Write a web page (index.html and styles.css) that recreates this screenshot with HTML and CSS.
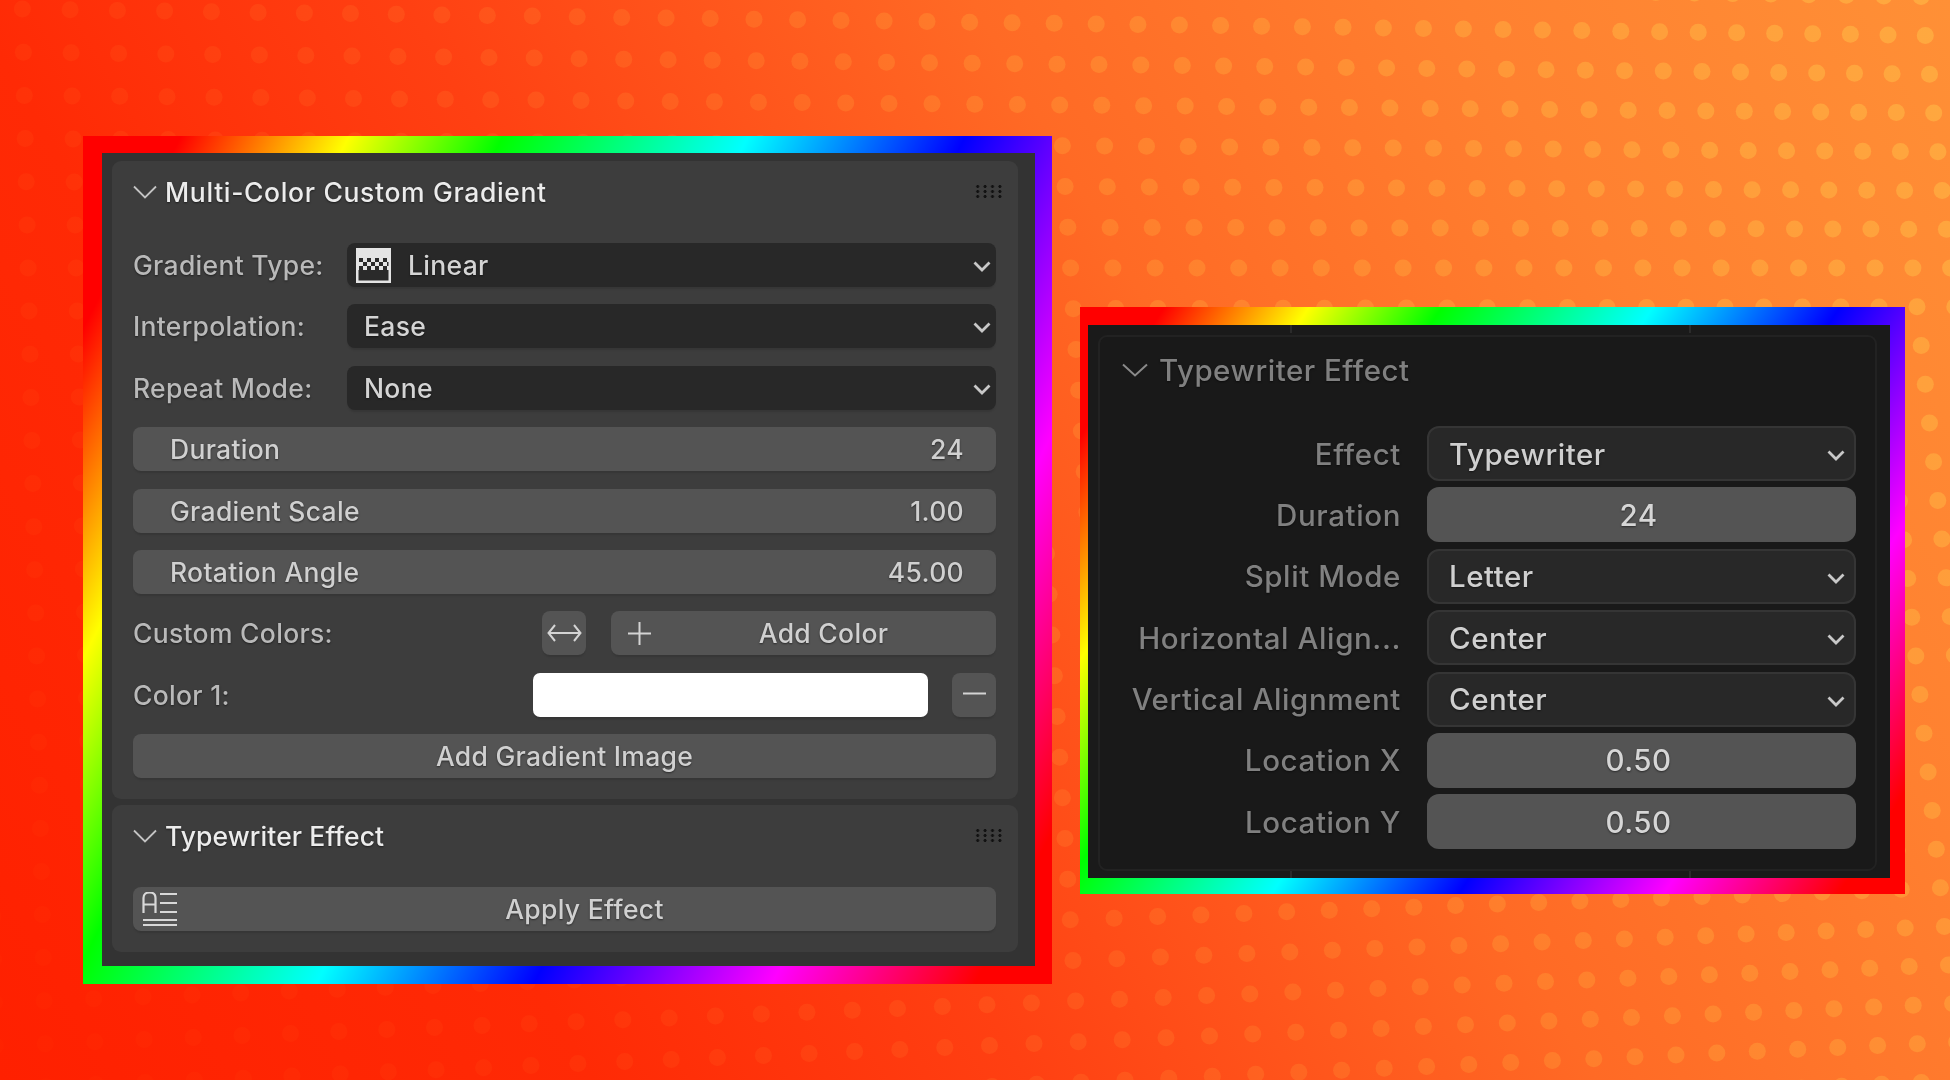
FILE: index.html
```html
<!DOCTYPE html>
<html lang="en">
<head>
<meta charset="utf-8">
<title>Gradient and Typewriter Panels</title>
<link rel="stylesheet" href="styles.css">
</head>
<body>
<div class="stage">
  <svg class="dots" id="dots" width="1950" height="1080" viewBox="0 0 1950 1080" aria-hidden="true">
    <defs>
      <linearGradient id="dotFill" gradientUnits="userSpaceOnUse" x1="10" y1="1097" x2="1940" y2="-17">
        <stop offset="0" stop-color="#ff2200"/>
        <stop offset="0.23" stop-color="#ff3208"/>
        <stop offset="0.4" stop-color="#ff4e18"/>
        <stop offset="0.62" stop-color="#ff7e2c"/>
        <stop offset="0.81" stop-color="#ff9838"/>
        <stop offset="1" stop-color="#ffaa40"/>
      </linearGradient>
    </defs>
  </svg>

  <section class="frame frame-left">
    <div class="inner inner-left">
      <div class="panel">
        <header class="head">
          <svg class="fold" viewBox="0 0 24 14"><path d="M1 1.500 12 12.500 23 1.500"/></svg>
          <span class="title title-long">Multi-Color Custom Gradient</span>
          <i class="grip"></i>
        </header>
        <div class="rows">
          <div class="row">
            <span class="label">Gradient Type:</span>
            <div class="select select-wide">
              <svg class="gradicon" viewBox="0 0 35 35">
                <rect x="0" y="0" width="35" height="35" fill="#e4e4e4"/>
                <rect x="2.500" y="22" width="30" height="10.500" fill="#2a2a2a"/>
                <path fill="#2a2a2a" d="M3 10h4v4H3zM11 10h4v4h-4zM19 10h4v4h-4zM27 10h4v4h-4zM7 14h4v4H7zM15 14h4v4h-4zM23 14h4v4h-4zM31 14h1.500v4H31zM3 18h4v4H3zM11 18h4v4h-4zM19 18h4v4h-4zM27 18h4v4h-4z"/>
              </svg>
              <span class="value icon-value">Linear</span>
              <svg class="caret" viewBox="0 0 18 11"><path d="M1.500 1.500 9 9 16.500 1.500"/></svg>
            </div>
          </div>
          <div class="row">
            <span class="label">Interpolation:</span>
            <div class="select select-wide">
              <span class="value">Ease</span>
              <svg class="caret" viewBox="0 0 18 11"><path d="M1.500 1.500 9 9 16.500 1.500"/></svg>
            </div>
          </div>
          <div class="row">
            <span class="label">Repeat Mode:</span>
            <div class="select select-wide">
              <span class="value">None</span>
              <svg class="caret" viewBox="0 0 18 11"><path d="M1.500 1.500 9 9 16.500 1.500"/></svg>
            </div>
          </div>
          <div class="field"><span>Duration</span><span>24</span></div>
          <div class="field"><span>Gradient Scale</span><span>1.00</span></div>
          <div class="field"><span>Rotation Angle</span><span>45.00</span></div>
          <div class="row">
            <span class="label label-grow">Custom Colors:</span>
            <div class="btn btn-square btn-swap">
              <svg class="swap" viewBox="0 0 35 20"><path d="M8 2 1.500 10 8 18M27 2 33.500 10 27 18M2 10H33"/></svg>
            </div>
            <div class="btn btn-add">
              <svg class="plus" viewBox="0 0 23 23"><path d="M11.500 0V23M0 11.500H23"/></svg>
              <span class="btn-text">Add Color</span>
            </div>
          </div>
          <div class="row">
            <span class="label label-grow">Color 1:</span>
            <div class="swatch"></div>
            <div class="btn btn-square">
              <svg class="plus" viewBox="0 0 23 23"><path d="M0 10.500H23"/></svg>
            </div>
          </div>
          <div class="btn btn-full"><span class="btn-text">Add Gradient Image</span></div>
        </div>
      </div>
      <div class="panel">
        <header class="head">
          <svg class="fold" viewBox="0 0 24 14"><path d="M1 1.500 12 12.500 23 1.500"/></svg>
          <span class="title">Typewriter Effect</span>
          <i class="grip"></i>
        </header>
        <div class="btn btn-apply">
          <svg class="texticon" viewBox="0 0 36 34">
            <path d="M1.500 22V7C1.500 3 4 1.500 7.500 1.500S13.500 3 13.500 7V22M1.500 13.500H13.500M18 3H35M18 12H35M18 21H35M1 29H35M1 34H35" transform="translate(0 -1)"/>
          </svg>
          <span class="btn-text">Apply Effect</span>
        </div>
      </div>
    </div>
  </section>

  <section class="frame frame-right">
    <div class="inner inner-right">
      <div class="panel-dark">
        <header class="head head-dark">
          <svg class="fold fold-dark" viewBox="0 0 26 14"><path d="M1 1.500 13 12.500 25 1.500"/></svg>
          <span class="title title-dark">Typewriter Effect</span>
        </header>
        <div class="props">
          <span class="prop-label">Effect</span>
          <div class="select select-dark"><span class="value">Typewriter</span><svg class="caret caret-dark" viewBox="0 0 18 11"><path d="M1.500 1.500 9 9 16.500 1.500"/></svg></div>
          <span class="prop-label">Duration</span>
          <div class="num">24</div>
          <span class="prop-label">Split Mode</span>
          <div class="select select-dark"><span class="value">Letter</span><svg class="caret caret-dark" viewBox="0 0 18 11"><path d="M1.500 1.500 9 9 16.500 1.500"/></svg></div>
          <span class="prop-label">Horizontal Align...</span>
          <div class="select select-dark"><span class="value">Center</span><svg class="caret caret-dark" viewBox="0 0 18 11"><path d="M1.500 1.500 9 9 16.500 1.500"/></svg></div>
          <span class="prop-label">Vertical Alignment</span>
          <div class="select select-dark"><span class="value">Center</span><svg class="caret caret-dark" viewBox="0 0 18 11"><path d="M1.500 1.500 9 9 16.500 1.500"/></svg></div>
          <span class="prop-label">Location X</span>
          <div class="num">0.50</div>
          <span class="prop-label">Location Y</span>
          <div class="num">0.50</div>
        </div>
      </div>
    </div>
  </section>
</div>
<script src="dots.js"></script>
</body>
</html>
```
FILE: styles.css
```css
* { box-sizing: border-box; }
html, body { margin: 0; padding: 0; }
body { width: 1950px; height: 1080px; overflow: hidden; font-family: Inter, "Liberation Sans", sans-serif; }

.stage {
  position: relative;
  width: 1950px;
  height: 1080px;
  padding: 136px 0 0 83px;
  display: flex;
  align-items: flex-start;
  gap: 28px;
  background: linear-gradient(60deg, #ff2000 0%, #ff2a05 23%, #ff4012 40%, #ff6a25 62%, #ff8030 81%, #ff9036 100%);
}
.dots { position: absolute; left: 0; top: 0; }

.frame {
  position: relative;
  background: linear-gradient(var(--angle), #f00 7%, #ff0 19%, #0f0 30%, #0ff 47.500%, #00f 63%, #f0f 80%, #f00 94.500%);
}
.frame-left { --angle: 117deg; width: 969px; height: 848px; padding: 17px 17px 18px 19px; }
.frame-right { --angle: 123deg; width: 825px; height: 587px; margin-top: 171px; padding: 18px 15px 16px 8px; }

.inner { height: 100%; filter: blur(0.7px); }
.inner-left { background: #333; padding: 8px 17px 13px 10px; display: flex; flex-direction: column; gap: 6px; }
.inner-right {
  padding: 10px 13px 7px 10px;
  background:
    linear-gradient(#2b2b2b, #2b2b2b) 202px 0 / 2px 8px no-repeat,
    linear-gradient(#2b2b2b, #2b2b2b) 601px 0 / 2px 8px no-repeat,
    linear-gradient(#2b2b2b, #2b2b2b) 202px 100% / 2px 7px no-repeat,
    linear-gradient(#2b2b2b, #2b2b2b) 601px 100% / 2px 7px no-repeat,
    #1a1a1a;
}

.panel { background: #3d3d3d; border-radius: 9px; padding: 0 22px 21px 21px; }
.panel-dark { height: 100%; border: 2px solid #222; border-radius: 9px; padding: 0 19px 0 0; background: #191919; }

.head { height: 62px; margin-bottom: 20px; display: flex; align-items: center; gap: 8px; position: relative; }
.head-dark { height: 66px; margin-bottom: 23px; padding-left: 22px; gap: 11px; }
.fold { width: 24px; height: 14px; flex: none; fill: none; stroke: #c4c4c4; stroke-width: 1.800; }
.fold-dark { width: 26px; stroke: #8a8a8a; stroke-width: 2; }
.title { font-size: 26.500px; font-weight: 500; color: #ececec; letter-spacing: 0.100px; text-shadow: 0 1px 2px rgba(0,0,0,.55); white-space: nowrap; }
.title-long { letter-spacing: 0.650px; }
.title-dark { font-size: 29.500px; font-weight: 500; color: #808080; letter-spacing: 0.500px; }
.grip {
  position: absolute;
  right: -6px;
  top: 23px;
  width: 28px;
  height: 14px;
  background: radial-gradient(circle, #111 0 1.200px, rgba(17,17,17,0) 1.800px) 0 0 / 7.400px 5px;
}

.rows { display: flex; flex-direction: column; gap: 17.400px; }
.row { display: flex; align-items: center; height: 44px; }
.label { font-size: 26.500px; font-weight: 500; color: #b9b9b9; letter-spacing: 0.300px; width: 214px; flex: none; text-shadow: 0 1px 2px rgba(0,0,0,.5); white-space: nowrap; }
.label-grow { flex: 1; width: auto; }

.select { height: 44px; background: #282828; border-radius: 8px; display: flex; align-items: center; position: relative; box-shadow: 0 3px 2px -1px rgba(0,0,0,.12); }
.select-wide { flex: 1; padding-left: 17px; }
.gradicon { position: absolute; left: 9px; top: 5px; width: 35px; height: 35px; }
.value { font-size: 26.500px; font-weight: 500; color: #d4d4d4; letter-spacing: 0.300px; text-shadow: 0 1px 2px rgba(0,0,0,.5); white-space: nowrap; }
.icon-value { margin-left: 44px; }
.caret { position: absolute; right: 5px; top: 18px; width: 18px; height: 11px; fill: none; stroke: #c8c8c8; stroke-width: 2.800; }

.field {
  height: 44px;
  background: #545454;
  border-radius: 8px;
  padding: 0 32px 0 37px;
  display: flex;
  align-items: center;
  justify-content: space-between;
  font-size: 26.500px;
  font-weight: 500;
  letter-spacing: 0.300px;
  color: #d0d0d0;
  text-shadow: 0 1px 2px rgba(0,0,0,.5);
  box-shadow: 0 3px 2px -1px rgba(0,0,0,.12);
}

.btn {
  height: 44px;
  background: #545454;
  border-radius: 8px;
  display: flex;
  align-items: center;
  position: relative;
  box-shadow: 0 3px 2px -1px rgba(0,0,0,.12);
}
.btn-text { flex: 1; text-align: center; font-size: 26.500px; font-weight: 500; letter-spacing: 0.300px; color: #d0d0d0; text-shadow: 0 1px 2px rgba(0,0,0,.5); white-space: nowrap; }
.btn-square { width: 44px; flex: none; justify-content: center; }
.btn-swap { margin-right: 25px; }
.btn-add { width: 385px; flex: none; padding-left: 17px; }
.btn-apply { padding: 0 5px 0 9px; }
.swap { width: 35px; height: 20px; fill: none; stroke: #d4d4d4; stroke-width: 2; }
.plus { width: 23px; height: 23px; fill: none; stroke: #d4d4d4; stroke-width: 2; }
.texticon { width: 36px; height: 34px; flex: none; fill: none; stroke: #d8d8d8; stroke-width: 2.200; }
.swatch { width: 395px; height: 44px; margin-right: 24px; background: #fff; border-radius: 7px; box-shadow: 0 3px 2px -1px rgba(0,0,0,.15); }

.props { display: grid; grid-template-columns: 301px 429px; column-gap: 26px; row-gap: 6.400px; grid-auto-rows: 55px; align-items: center; }
.prop-label { text-align: right; font-size: 29.500px; font-weight: 500; color: #808080; letter-spacing: 0.600px; text-shadow: 0 1px 2px rgba(0,0,0,.5); white-space: nowrap; }
.select-dark { height: 55px; background: #282828; border: 2px solid #353535; border-radius: 12px; padding-left: 20px; box-shadow: none; }
.select-dark .value { font-size: 29.500px; color: #cfcfcf; letter-spacing: 0.500px; }
.caret-dark { right: 8px; top: 22px; width: 20px; }
.num {
  height: 55px;
  background: #545454;
  border-radius: 12px;
  display: flex;
  align-items: center;
  justify-content: center;
  font-size: 29.500px;
  font-weight: 500;
  color: #d6d6d6;
  letter-spacing: 0.500px;
  padding-right: 6px;
  text-shadow: 0 1px 2px rgba(0,0,0,.5);
}
```
FILE: dots.js
```js
(function () {
  var svg = document.getElementById('dots');
  var NS = 'http://www.w3.org/2000/svg';
  function col(i) {
    return 8727 - (8727 - 1524) * Math.exp(-0.00555 * i);
  }
  for (var i = -45; i <= 14; i++) {
    var x0 = col(i);
    for (var j = -8; j <= 22; j++) {
      var x = x0 + j * (0.9 + 0.0017 * x0);
      var y = 268 + j * (43.2 - 0.0023 * x);
      if (x < -12 || x > 1962 || y < -12 || y > 1092) continue;
      var c = document.createElementNS(NS, 'circle');
      c.setAttribute('cx', x.toFixed(1));
      c.setAttribute('cy', y.toFixed(1));
      c.setAttribute('r', '8.5');
      c.setAttribute('fill', 'url(#dotFill)');
      svg.appendChild(c);
    }
  }
})();
```
